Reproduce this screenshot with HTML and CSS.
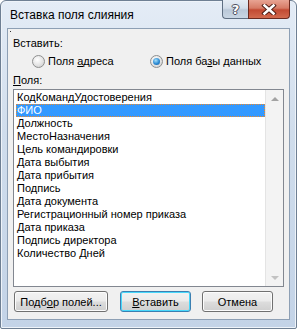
FILE: index.html
```html
<!DOCTYPE html>
<html lang="ru">
<head>
    <meta charset="UTF-8">
    <title>Вставка поля слияния</title>
    <link rel="stylesheet" href="styles.css">
</head>
<body>
    <div class="window">
        <div class="titlebar">
            <span class="title">Вставка поля слияния</span>
            <div class="caption-buttons">
                <div class="cap-btn help">?</div>
                <div class="cap-btn close">
                    <svg width="16" height="11" viewBox="0 0 16 11">
                        <path d="M3.5 1.5 L12.5 9.5 M12.5 1.5 L3.5 9.5" stroke="#4a1a12" stroke-width="4.4" stroke-linecap="square"/>
                        <path d="M3.5 1.5 L12.5 9.5 M12.5 1.5 L3.5 9.5" stroke="#fff" stroke-width="2.6" stroke-linecap="square"/>
                    </svg>
                </div>
            </div>
        </div>

        <div class="client">
            <span class="focus-dot"></span>
            <div class="label">Вставить:</div>
            <div class="radios">
                <label class="radio first"><span class="circle"></span><span>Поля <u>а</u>дреса</span></label>
                <label class="radio checked"><span class="circle"></span><span>Поля ба<u>з</u>ы данных</span></label>
            </div>
            <div class="label fields-label"><u>П</u>оля:</div>

            <div class="listbox">
                <ul class="items">
                    <li>КодКомандУдостоверения</li>
                    <li class="selected">ФИО</li>
                    <li>Должность</li>
                    <li>МестоНазначения</li>
                    <li>Цель командировки</li>
                    <li>Дата выбытия</li>
                    <li>Дата прибытия</li>
                    <li>Подпись</li>
                    <li>Дата документа</li>
                    <li>Регистрационный номер приказа</li>
                    <li>Дата приказа</li>
                    <li>Подпись директора</li>
                    <li>Количество Дней</li>
                </ul>
                <div class="scrollbar">
                    <span class="arrow up"></span>
                    <span class="arrow down"></span>
                </div>
            </div>

            <div class="buttons">
                <button class="btn wide">Подб<u>о</u>р полей...</button>
                <button class="btn default"><u>В</u>ставить</button>
                <button class="btn">Отмена</button>
            </div>
        </div>
    </div>
</body>
</html>
```

FILE: styles.css
```css
body {
    margin: 0;
    width: 297px;
    height: 329px;
    overflow: hidden;
    font-family: "Liberation Sans", Arial, sans-serif;
    font-size: 11px;
    color: #000;
    background: #fff;
}
.window {
    box-sizing: border-box;
    width: 297px;
    height: 329px;
    border: 1px solid #6e7f93;
    border-radius: 6px 6px 2px 2px;
    background: linear-gradient(#e4ecf6, #d0ddec 40%, #c3d3e7);
    display: flex;
    flex-direction: column;
    box-shadow: inset 0 0 0 1px #eef3f9;
}
.titlebar {
    height: 27px;
    display: flex;
    align-items: flex-start;
    flex-shrink: 0;
}
.title {
    margin: 7px 0 0 9px;
    font-size: 12px;
    color: #000;
}
.caption-buttons {
    margin-left: auto;
    margin-right: 6px;
    margin-top: -1px;
    display: flex;
}
.cap-btn {
    box-sizing: border-box;
    height: 19px;
    border: 1px solid #5f6f82;
    border-top: none;
    display: flex;
    align-items: center;
    justify-content: center;
}
.help {
    width: 26px;
    border-radius: 0 0 0 4px;
    border-right: none;
    background: linear-gradient(#e5ecf4, #d3dde9 45%, #bac8d8 55%, #c9d6e4);
    color: #fff;
    font-family: "DejaVu Sans", sans-serif;
    font-weight: bold;
    font-size: 13px;
    text-shadow: 0 0 1px #334, 1px 0 0 #556, -1px 0 0 #556, 0 1px 0 #556, 0 -1px 0 #556;
}
.close {
    width: 42px;
    border-radius: 0 0 4px 0;
    border-color: #6b2a20;
    background: linear-gradient(#e8a493, #d67b66 45%, #c24a33 55%, #d26a4f);
}
.client {
    position: relative;
    flex: 1;
    margin: 0 6px 8px 6px;
    border: 1px solid #8d9fb4;
    background: #f0f0f0;
    padding: 8px 5px 0 5px;
    display: flex;
    flex-direction: column;
}
.focus-dot {
    position: absolute;
    left: 2px;
    top: 2px;
    width: 1px;
    height: 1px;
    background: #333;
}
.label {
    line-height: 13px;
}
.radios {
    display: flex;
    margin-top: 4px;
    height: 14px;
    line-height: 14px;
}
.radio {
    display: flex;
    align-items: center;
    flex-shrink: 0;
}
.radio.first {
    margin-left: 19px;
    width: 118px;
}
.circle {
    box-sizing: border-box;
    width: 13px;
    height: 13px;
    border-radius: 50%;
    border: 1px solid #8e8f8f;
    background: radial-gradient(circle at 40% 35%, #ffffff, #e6e6e6 50%, #c8c8c8);
    margin-right: 3px;
    display: flex;
    align-items: center;
    justify-content: center;
}
.checked .circle::after {
    content: "";
    width: 7px;
    height: 7px;
    border-radius: 50%;
    background: radial-gradient(circle at 40% 35%, #a6e0fb, #2b8ad3 55%, #1a5a9a);
}
.fields-label {
    margin-top: 6px;
}
.listbox {
    margin-top: 2px;
    height: 198px;
    box-sizing: border-box;
    border: 1px solid #828790;
    background: #fff;
    display: flex;
}
.items {
    list-style: none;
    margin: 0;
    padding: 1px 0 0 2px;
    flex: 1;
}
.items li {
    height: 13px;
    line-height: 13px;
    padding-left: 1px;
    white-space: nowrap;
}
.items li.selected {
    background: #3399ff;
    color: #fff;
    outline: 1px dotted #f08a2a;
    outline-offset: -1px;
}
.scrollbar {
    width: 17px;
    background: #f3f3f3;
    border-left: 1px solid #e4e4e4;
    display: flex;
    flex-direction: column;
    justify-content: space-between;
    align-items: center;
    padding: 7px 0 6px 0;
}
.arrow {
    width: 0;
    height: 0;
    border-left: 4px solid transparent;
    border-right: 4px solid transparent;
}
.arrow.up {
    border-bottom: 4px solid #a3a3a3;
}
.arrow.down {
    border-top: 4px solid #c2c2c2;
}
.buttons {
    display: flex;
    margin-top: 4px;
    margin-left: 1px;
}
.btn {
    box-sizing: border-box;
    height: 21px;
    width: 74px;
    padding: 0;
    margin-right: 11px;
    font-family: inherit;
    font-size: 11px;
    white-space: nowrap;
    color: #000;
    border: 1px solid #707070;
    border-radius: 3px;
    background: linear-gradient(#f2f2f2, #ebebeb 48%, #dddddd 52%, #cfcfcf);
    box-shadow: inset 0 0 0 1px #fcfcfc;
}
.btn.wide {
    width: 98px;
    margin-right: 12px;
}
.btn.default {
    border-color: #3c7fb1;
    box-shadow: inset 0 0 0 1px #48d8fb;
}
```
